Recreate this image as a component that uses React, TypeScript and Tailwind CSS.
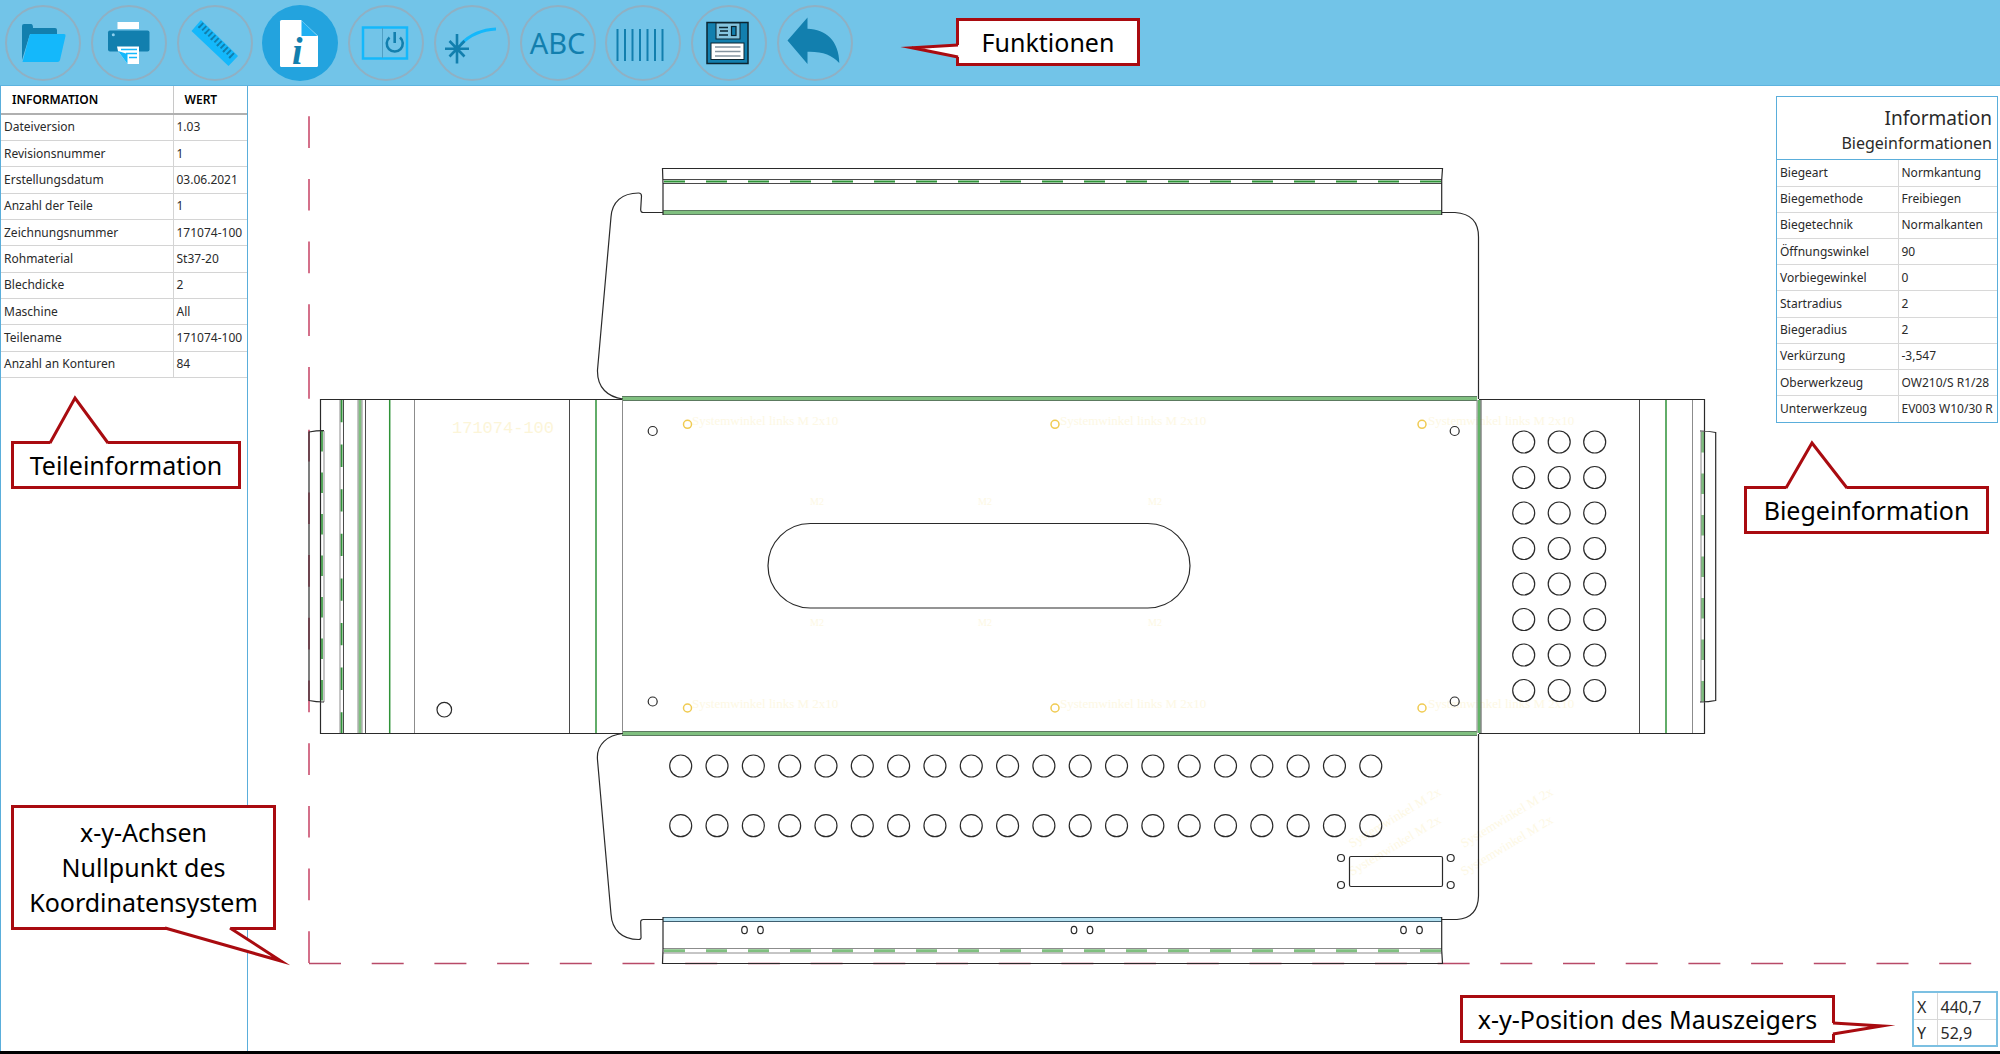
import React from "react";

type IconButton = { label: string; active?: boolean; icon: React.ReactNode };

const DARK = "#127fae";
const BRIGHT = "#14b8fb";

function Glyph({ children }: { children: React.ReactNode }) {
  return (
    <svg viewBox="5 5 76 76" className="size-full" aria-hidden="true">
      {children}
    </svg>
  );
}

const functions: IconButton[] = [
  {
    label: "Öffnen",
    icon: (
      <Glyph>
        <path d="M22 60V26q0-2 2-2h7q2 0 2 4h22q2 0 2 2v4H30z" fill={DARK} />
        <path d="M30.500 34H64q2 0 1.500 2L60 60q-.5 2-2.500 2H22.500l7-26.500z" fill={BRIGHT} />
      </Glyph>
    ),
  },
  {
    label: "Drucken",
    icon: (
      <Glyph>
        <rect x="31.500" y="22" width="21.500" height="7" fill="#fff" />
        <rect x="22" y="30.500" width="41.500" height="21" rx="2" fill={DARK} />
        <circle cx="27.300" cy="34.800" r="1.500" fill="#8fd0ee" />
        <path d="M31 46.500H53V64H41.500L32 51z" fill="#fff" />
        <path d="M32 51l9.500 13V54z" fill={BRIGHT} />
        <path d="M35 49.500H51M40 53.500H51M43 57.500H51" stroke={BRIGHT} strokeWidth="1.500" />
      </Glyph>
    ),
  },
  {
    label: "Messen",
    icon: (
      <Glyph>
        <path d="M29 20L66 56 56.500 66 19.500 31z" fill={BRIGHT} />
        <path d="M28.500 24.500L61 56.500" stroke={DARK} strokeWidth="6" strokeDasharray="1.900 2.400" />
        <path d="M26.500 26.500L59 58.500" stroke={DARK} strokeWidth="2" strokeDasharray="1.900 6.700" />
      </Glyph>
    ),
  },
  {
    label: "Information",
    active: true,
    icon: (
      <Glyph>
        <path d="M24.500 20H44L61 36V65.500q0 1.500-1.500 1.500H24.500q-1.500 0-1.500-1.500V21.500q0-1.500 1.500-1.500z" fill="#fff" />
        <path d="M44.500 20.500L60.500 36H44.500z" fill="#1fb0f2" />
        <text x="35" y="63.500" fontSize="38" fontWeight="700" fontStyle="italic" fontFamily="Liberation Serif, serif" fill={DARK}>
          i
        </text>
      </Glyph>
    ),
  },
  {
    label: "Ansicht umschalten",
    icon: (
      <Glyph>
        <rect x="20" y="27.500" width="44" height="31" fill="none" stroke={BRIGHT} strokeWidth="2.500" />
        <path d="M39.500 28V58" stroke="#4f9fc4" strokeWidth="1" />
        <path d="M46.500 37.500a8 8 0 1 0 10.500 0M51.700 32V43" fill="none" stroke={DARK} strokeWidth="2.600" />
      </Glyph>
    ),
  },
  {
    label: "Laser",
    icon: (
      <Glyph>
        <path d="M32 44Q46 30 67 29" fill="none" stroke={BRIGHT} strokeWidth="3" />
        <path d="M16 48.700H40M28 34V63.500M20.500 41l15 15.500M35.500 41l-15 15.500" stroke={DARK} strokeWidth="2.600" />
      </Glyph>
    ),
  },
  {
    label: "Beschriftung",
    icon: <span className="text-[29px] leading-none text-[#127fae]">ABC</span>,
  },
  {
    label: "Strichcode",
    icon: (
      <Glyph>
        <path d="M17.500 29V61M25 29V61M32.500 29V61M40 29V61M47.500 29V61M55 29V61M62.500 29V61" stroke={DARK} strokeWidth="2" />
      </Glyph>
    ),
  },
  {
    label: "Speichern",
    icon: (
      <Glyph>
        <rect x="21" y="22.500" width="41" height="41" fill={DARK} stroke="#0b2430" strokeWidth="1.500" />
        <rect x="30" y="23" width="24" height="16" fill="#86c4de" stroke="#0b2430" />
        <rect x="45.500" y="26.500" width="4.500" height="9" fill={DARK} stroke="#0b2430" strokeWidth="1.200" />
        <path d="M33 27.500H42M34 31H42M33 35H42" stroke="#0b2430" strokeWidth="1.400" />
        <rect x="25" y="43" width="33" height="16.500" fill="#fff" stroke="#0b2430" />
        <path d="M29 47H54.500M29 51.500H54.500M29 56H54.500" stroke="#8494a0" strokeWidth="1.600" />
      </Glyph>
    ),
  },
  {
    label: "Zurück",
    icon: (
      <Glyph>
        <path d="M15.500 40.500L35.500 17.500V28.700C54 29 67 41 67.300 63Q57 51 35.500 51.700V64z" fill={DARK} />
      </Glyph>
    ),
  },
];

const partInfo = [
  ["Dateiversion", "1.03"],
  ["Revisionsnummer", "1"],
  ["Erstellungsdatum", "03.06.2021"],
  ["Anzahl der Teile", "1"],
  ["Zeichnungsnummer", "171074-100"],
  ["Rohmaterial", "St37-20"],
  ["Blechdicke", "2"],
  ["Maschine", "All"],
  ["Teilename", "171074-100"],
  ["Anzahl an Konturen", "84"],
];

const bendInfo = [
  ["Biegeart", "Normkantung"],
  ["Biegemethode", "Freibiegen"],
  ["Biegetechnik", "Normalkanten"],
  ["Öffnungswinkel", "90"],
  ["Vorbiegewinkel", "0"],
  ["Startradius", "2"],
  ["Biegeradius", "2"],
  ["Verkürzung", "-3,547"],
  ["Oberwerkzeug", "OW210/S R1/28"],
  ["Unterwerkzeug", "EV003 W10/30 R"],
];

const range = (n: number) => Array.from({ length: n }, (_, i) => i);

/* A bordered note; `tail` is the pointer's outline, `gap` the white area that opens the border. */
function Callout({ className, tail, gap, children }: { className: string; tail: string; gap: string; children: React.ReactNode }) {
  return (
    <div className={`absolute z-20 flex items-center justify-center border-3 border-[#a90b10] bg-white text-center text-[25px] leading-[35px] whitespace-nowrap text-black ${className}`}>
      <svg className="absolute inset-0 size-full overflow-visible" aria-hidden="true">
        <path d={gap} fill="#fff" />
        <path d={tail} fill="none" stroke="#a90b10" strokeWidth="3" strokeMiterlimit="20" />
      </svg>
      <span className="relative">{children}</span>
    </div>
  );
}

function Drawing() {
  const grey = "#8c8c8c";
  const line = "#2a2a2a";
  const green = "#2f9338";
  const soft = "#80c080";
  return (
    <svg viewBox="248 86 1752 965" className="absolute inset-0 size-full" fill="none" role="img" aria-label="Abwicklung 171074-100">
      <path d="M309 963V115" stroke="#d4708a" strokeWidth="2" strokeDasharray="31.700 31" />
      <path d="M309 963.500H1973" stroke="#b84a68" strokeWidth="1.500" strokeDasharray="32 30.700" />

      <g fill="#fcf5d8" fontFamily="Liberation Mono, monospace">
        <text x="452" y="433" fontSize="17">171074-100</text>
        <g fill="#fdf8e4" fontFamily="Liberation Serif, serif" fontSize="13">
          {[692, 1060, 1428].map((x) => (
            <g key={x}>
              <text x={x} y="425">Systemwinkel links M 2x10</text>
              <text x={x} y="708">Systemwinkel links M 2x10</text>
            </g>
          ))}
          {[810, 978, 1148].map((x) => (
            <g key={x} fontSize="10">
              <text x={x} y="505">M2</text>
              <text x={x} y="626">M2</text>
            </g>
          ))}
          <text transform="translate(1352 848) rotate(-31)">Systemwinkel M 2x</text>
          <text transform="translate(1352 876) rotate(-31)">Systemwinkel M 2x</text>
          <text transform="translate(1464 848) rotate(-31)">Systemwinkel M 2x</text>
          <text transform="translate(1464 876) rotate(-31)">Systemwinkel M 2x</text>
        </g>
      </g>

      {/* bend zones: fill between the two bend lines */}
      <g stroke={soft} strokeWidth="3">
        <path d="M663 212.500H1442M622 398.500H1477M622 733.500H1477M360 400V733" />
        <path d="M1479 400V733" stroke="#63b368" />
        <path d="M663 919.500H1442" stroke="#b5e2f2" />
        <path d="M664 950.700H1441" strokeDasharray="21 21" />
        <path d="M1702.500 432V702" strokeDasharray="20.500 21" />
        <path d="M321.500 431V701" strokeDasharray="20.500 21" stroke="#55aa5b" />
      </g>
      <g stroke={green} strokeWidth="2">
        <path d="M664 181.500H1441" strokeDasharray="21 21" />
        <path d="M341.500 400V733" strokeDasharray="22.300 22.300" />
        <path d="M389.700 400V733M596 400V733M1666 400V733" strokeWidth="1.500" />
      </g>
      <g stroke={grey}>
        <path d="M663 210.500H1442M663 214.500H1442M622 396.500H1477M622 400.500H1477M622 731.500H1477M622 735.500H1477" stroke="#5c7a60" />
        <path d="M358 400V733M362 400V733M414.500 400V733M622.500 400V733M1477 400V733M1692.500 400V733" />
        <path d="M320.500 400V733M324 431V702M340 400V733M1701 432V702" />
        <path d="M663 917.500H1442M663 921.500H1442" stroke="#3f5f70" />
        <path d="M663 948.500H1442M663 953H1442" />
      </g>

      <g stroke={line} strokeWidth="1.200">
        <path d="M663 179.500H1442M663 183.500H1442M343.500 400V733M365.500 400V733M569.500 400V733M1639.500 400V733M1481 400V733" strokeWidth="1" stroke="#4a4a4a" />
        <path d="M622 399.500H320.500V733.500H622M324 430.700Q316 430.700 309 432V700.500Q316 702 324 702" />
        <path d="M1479 399.500H1704.500V733.500H1479M1700 431Q1709 431 1715.700 432.500V700.500Q1709 702 1700 702" />
        <path d="M663 215V184L662.500 168.500H1442.500L1441.700 180V215" />
        <path d="M663 212.500H643.500Q640.500 212.500 640.700 209.500L641.500 196Q641.500 193 638.500 193C622 193 612 202 611 217L597.500 370C597 388 608 397 623 399" />
        <path d="M1442 212.500H1455Q1478.500 214 1478.500 237V399" />
        <path d="M623 733.500C608 735 596 744 597.500 760L611 914C612 930 622 939.500 638.500 939.500Q641.500 939.500 641 936.500L640.700 922.500Q640.500 919.500 643.500 919.500H663" />
        <path d="M1478.500 734V896Q1478 918 1457 919.500H1442" />
        <path d="M663 917V950L662.500 963.500H1442.500L1441.700 950V917" />
        <rect x="768" y="523.500" width="422" height="84.500" rx="42.200" />
        <rect x="1349.500" y="856.500" width="93" height="30" rx="1.500" />
        <circle cx="444.300" cy="709.700" r="7.300" />
        {[652.7, 1454.7].map((x) => [431, 701.5].map((y) => <circle key={`${x}-${y}`} cx={x} cy={y} r="4.500" />))}
        {[1341, 1450.7].map((x) => [858, 885].map((y) => <circle key={`${x}-${y}`} cx={x} cy={y} r="3.500" />))}
        {[744.5, 760.5, 1074, 1090, 1403.5, 1419.5].map((x) => (
          <ellipse key={x} cx={x} cy="930" rx="2.800" ry="3.700" />
        ))}
        {range(8).map((r) => range(3).map((c) => <circle key={`${r}-${c}`} cx={1523.7 + c * 35.5} cy={442 + r * 35.5} r="11" />))}
        {range(20).map((c) => [766, 825.7].map((y) => <circle key={`${c}-${y}`} cx={680.7 + c * 36.32} cy={y} r="11" />))}
      </g>
      <g stroke="#f0cb52" strokeWidth="1.500">
        {[687.5, 1055, 1422].map((x) => [424.3, 708].map((y) => <circle key={`${x}-${y}`} cx={x} cy={y} r="4" />))}
      </g>
    </svg>
  );
}

export default function App() {
  return (
    <div className="relative flex min-h-screen flex-col overflow-hidden border-b-[3px] border-black bg-white font-['Noto_Sans',sans-serif] text-[#2a2a2a]">
      <header className="relative flex h-[86px] shrink-0 items-center border-b border-[#5db3df] bg-[#72c4e8] pl-[5px]">
        <nav aria-label="Funktionen" className="flex w-[848px] justify-between">
          {functions.map((f) => (
            <button
              key={f.label}
              type="button"
              aria-label={f.label}
              aria-pressed={f.active}
              className={
                f.active
                  ? "flex size-[76px] items-center justify-center rounded-full bg-[#23a3de]"
                  : "flex size-[76px] items-center justify-center rounded-full border-2 border-[#90b0c3] [&>svg]:-m-[2px] [&>svg]:size-[76px] [&>svg]:shrink-0"
              }
            >
              {f.icon}
            </button>
          ))}
        </nav>
        <Callout className="top-[18px] left-[956px] h-12 w-[184px]" gap="M0 24L-47 26.700L0 36z" tail="M-1 24L-47 26.700L-1 36">
          Funktionen
        </Callout>
      </header>

      <div className="flex flex-1">
        <aside className="relative w-[248px] shrink-0 border-x border-[#5aaedb]">
          <table className="h-[292px] w-full table-fixed border-collapse text-[12px] leading-4">
            <colgroup>
              <col className="w-[172px]" />
              <col />
            </colgroup>
            <thead>
              <tr className="h-[28px] border-b-2 border-[#b0b0b0] text-left text-black">
                <th scope="col" className="border-r border-[#c8c8c8] pl-[11px] font-semibold">INFORMATION</th>
                <th scope="col" className="pl-[11px] font-semibold">WERT</th>
              </tr>
            </thead>
            <tbody>
              {partInfo.map(([k, v]) => (
                <tr key={k} className="h-[26px] border-b border-[#d4d4d4]">
                  <td className="border-r border-[#d4d4d4] pl-[3px]">{k}</td>
                  <td className="pl-[3px] whitespace-nowrap">{v}</td>
                </tr>
              ))}
            </tbody>
          </table>
          <Callout className="top-[355px] left-[10px] h-12 w-[230px]" gap="M36 0L61 -46L94 0z" tail="M36 -1L61 -46L94 -1">
            Teileinformation
          </Callout>
          <Callout className="top-[719px] left-[10px] h-[125px] w-[265px]" gap="M151 119L267 153L216 119z" tail="M151 120L267 153L216 120">
            x-y-Achsen
            <br />
            Nullpunkt des
            <br />
            Koordinatensystem
          </Callout>
        </aside>

        <main className="relative flex-1">
          <Drawing />
          <section className="absolute top-[10px] right-[2px] w-[222px] border border-[#5aaedb] bg-white">
            <div className="border-b border-[#5aaedb] pt-2 pr-[5px] pb-[5px] text-right">
              <h2 className="text-[19px] leading-[27px]">Information</h2>
              <h3 className="text-[16px] leading-[22px]">Biegeinformationen</h3>
            </div>
            <table className="h-[262px] w-full table-fixed border-collapse text-[12px] leading-4">
              <colgroup>
                <col className="w-[121px]" />
                <col />
              </colgroup>
              <tbody>
                {bendInfo.map(([k, v]) => (
                  <tr key={k} className="h-[26px] border-b border-[#d8d8d8] last:border-b-0">
                    <td className="border-r border-[#d8d8d8] pl-[3px]">{k}</td>
                    <td className="overflow-hidden pr-1 pl-[3px] whitespace-nowrap">{v}</td>
                  </tr>
                ))}
              </tbody>
            </table>
          </section>
          <Callout className="top-[400px] right-[11px] h-12 w-[245px]" gap="M39 0L65 -46L100 0z" tail="M39 -1L65 -46L100 -1">
            Biegeinformation
          </Callout>
          <Callout className="right-[165px] bottom-[8px] h-12 w-[375px]" gap="M369 25L419 28L369 36z" tail="M370 25L419 28L370 36">
            x-y-Position des Mauszeigers
          </Callout>
          <table className="absolute right-[2px] bottom-[4px] w-[86px] table-fixed border-collapse border-2 border-[#7cc0e2] bg-white text-[16px] leading-5">
            <colgroup>
              <col className="w-[24px]" />
              <col />
            </colgroup>
            <tbody>
              <tr className="h-[27px] border-b border-[#d8d8d8]">
                <th scope="row" className="border-r border-[#d8d8d8] pt-[2px] pl-[3px] text-left font-normal">X</th>
                <td className="pt-[2px] pl-[3px]">440,7</td>
              </tr>
              <tr className="h-[27px]">
                <th scope="row" className="border-r border-[#d8d8d8] pt-[2px] pl-[3px] text-left font-normal">Y</th>
                <td className="pt-[2px] pl-[3px]">52,9</td>
              </tr>
            </tbody>
          </table>
        </main>
      </div>
    </div>
  );
}
